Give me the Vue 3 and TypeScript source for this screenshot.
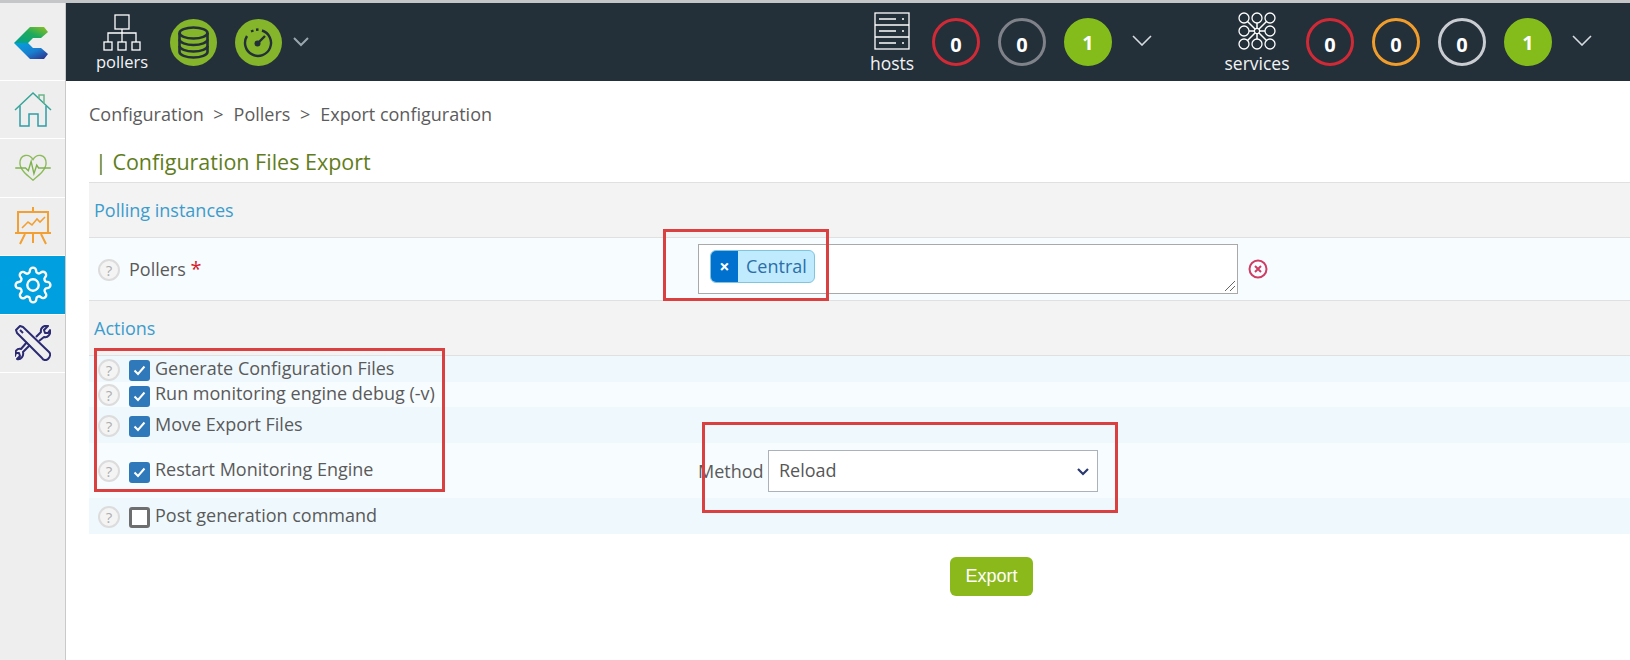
<script setup lang="ts">
interface ActionRow { label: string; checked: boolean; size: string; method?: boolean }
const rows: ActionRow[] = [
  { label: 'Generate Configuration Files', checked: true, size: 'r1' },
  { label: 'Run monitoring engine debug (-v)', checked: true, size: 'r2' },
  { label: 'Move Export Files', checked: true, size: 'r3' },
  { label: 'Restart Monitoring Engine', checked: true, size: 'r4', method: true },
  { label: 'Post generation command', checked: false, size: 'r5' },
]
const hostBadges = [
  { v: 0, c: 'red' }, { v: 0, c: 'gray' }, { v: 1, c: 'green' },
]
const serviceBadges = [
  { v: 0, c: 'red' }, { v: 0, c: 'orange' }, { v: 0, c: 'light' }, { v: 1, c: 'green' },
]
const grid = [-13, 0, 13]
</script>

<template>
  <div class="page">
    <aside class="sidebar">
      <div class="side logo">
        <svg width="66" height="77" viewBox="0 0 66 77">
          <defs>
            <linearGradient id="ct" x1="0" x2="1" y1="1" y2="0">
              <stop offset="0" stop-color="#00a08e" />
              <stop offset="0.55" stop-color="#1eaa5c" />
              <stop offset="1" stop-color="#93c01f" />
            </linearGradient>
            <linearGradient id="cb" x1="0" x2="1" y1="0" y2="1">
              <stop offset="0" stop-color="#00a3de" />
              <stop offset="0.55" stop-color="#1a7fd0" />
              <stop offset="1" stop-color="#2e2a86" />
            </linearGradient>
          </defs>
          <path d="M30 24H44L48 29L41 35H33L28 40H14Z" fill="url(#ct)" />
          <path d="M14 40H28L33 45H41L48 51L44 56H30Z" fill="url(#cb)" />
        </svg>
      </div>
      <div class="side">
        <svg width="40" height="38" viewBox="0 0 40 38" fill="none" stroke="#36a598" stroke-width="1.5">
          <path d="M2 19L20 2L38 19" />
          <path d="M26 8V4H31V13" stroke="#6bb58a" />
          <path d="M7 15V35H16V23H25V35H33V15" stroke="#2f9fa5" />
        </svg>
      </div>
      <div class="side">
        <svg width="40" height="28" viewBox="0 0 40 30" fill="none" stroke="#8dbb5b" stroke-width="1.5">
          <path d="M6 10C6 0 16 -1 20 6C24 -1 34 0 34 10C34 17 26 23 20 28C14 23 6 17 6 10Z" />
          <path d="M1 15H12L15 18L18 8L21 21L24 12L26 15H39" stroke="#7fb24d" />
        </svg>
      </div>
      <div class="side">
        <svg width="36" height="38" viewBox="0 0 36 38" fill="none" stroke="#f2a033" stroke-width="2">
          <path d="M18 0V5" />
          <rect x="3" y="5" width="30" height="21" />
          <path d="M0 26H36M10 27L5 37M26 27L31 37M18 27V36" />
          <path d="M7 21L13 15L17 18L22 12L25 15L30 10" stroke-width="1.6" />
        </svg>
      </div>
      <div class="side active">
        <svg width="38" height="38" viewBox="0 0 24 24" fill="none" stroke="#fff" stroke-width="1.5" stroke-linejoin="round">
          <circle cx="12" cy="12" r="3.6" />
          <path d="M19.4 15a1.65 1.65 0 0 0 .33 1.82l.06.06a2 2 0 0 1 0 2.83 2 2 0 0 1-2.83 0l-.06-.06a1.65 1.65 0 0 0-1.82-.33 1.65 1.65 0 0 0-1 1.51V21a2 2 0 0 1-2 2 2 2 0 0 1-2-2v-.09A1.65 1.65 0 0 0 9 19.4a1.65 1.65 0 0 0-1.82.33l-.06.06a2 2 0 0 1-2.83 0 2 2 0 0 1 0-2.83l.06-.06a1.65 1.65 0 0 0 .33-1.82 1.65 1.65 0 0 0-1.51-1H3a2 2 0 0 1-2-2 2 2 0 0 1 2-2h.09A1.65 1.65 0 0 0 4.6 9a1.65 1.65 0 0 0-.33-1.82l-.06-.06a2 2 0 0 1 0-2.83 2 2 0 0 1 2.83 0l.06.06a1.65 1.65 0 0 0 1.82.33H9a1.65 1.65 0 0 0 1-1.51V3a2 2 0 0 1 2-2 2 2 0 0 1 2 2v.09a1.65 1.65 0 0 0 1 1.51 1.65 1.65 0 0 0 1.82-.33l.06-.06a2 2 0 0 1 2.83 0 2 2 0 0 1 0 2.83l-.06.06a1.65 1.65 0 0 0-.33 1.82V9a1.65 1.65 0 0 0 1.51 1H21a2 2 0 0 1 2 2 2 2 0 0 1-2 2h-.09a1.65 1.65 0 0 0-1.51 1z" />
        </svg>
      </div>
      <div class="side">
        <svg width="36" height="36" viewBox="0 0 36 36" fill="none" stroke="#2b2a72" stroke-width="2" stroke-linejoin="round">
          <path d="M1 5L5 1L8 2L34 27C36 29 35 32 33 34C31 36 28 35 27 33L2 8Z" />
          <path d="M8 8L5 5" />
          <path d="M21 12L26 7C25 3 29 0 33 1L29 5L30 8L33 8L35 5C36 9 33 13 29 12L24 16M15 20L8 27C9 31 6 35 2 34L5 31L4 28L1 28L0 31C-1 27 2 23 6 24L12 17" />
        </svg>
      </div>
    </aside>

    <div class="right">
      <header class="topbar">
        <div class="block pollers">
          <svg width="38" height="38" viewBox="0 0 38 38" fill="none" stroke="#fff" stroke-width="1.3">
            <rect x="12" y="1" width="14" height="14" />
            <path d="M19 15V28M5 28V19H33V28" />
            <rect x="1" y="28" width="8" height="8" />
            <rect x="15" y="28" width="8" height="8" />
            <rect x="29" y="28" width="8" height="8" />
          </svg>
          <span>pollers</span>
        </div>
        <svg class="round db" width="47" height="47" viewBox="0 0 47 47">
          <circle cx="23.5" cy="23.5" r="23.5" fill="#84b52a" />
          <g fill="none" stroke="#232f39" stroke-width="2.6">
            <ellipse cx="23.5" cy="14" rx="14" ry="5.5" />
            <path d="M9.5 14V33C9.5 36 16 38.500 23.500 38.500C31 38.500 37.500 36 37.500 33V14" />
            <path d="M9.500 20.500C9.500 23.500 16 26 23.500 26C31 26 37.500 23.500 37.500 20.500" />
            <path d="M9.500 27C9.500 30 16 32.500 23.500 32.500C31 32.500 37.500 30 37.500 27" />
          </g>
        </svg>
        <svg class="round gauge" width="47" height="47" viewBox="0 0 47 47">
          <circle cx="23.500" cy="23.500" r="23.500" fill="#84b52a" />
          <g fill="none" stroke="#232f39" stroke-width="2.4">
            <path d="M27 11.500A13 13 0 1 1 12 17" />
            <path d="M16 12.500L18.500 11.500M21 10.700L23.500 10.500" />
            <path d="M23 24L30 17" />
          </g>
          <circle cx="22.500" cy="24.500" r="3" fill="#232f39" />
        </svg>
        <svg class="chev first" width="16" height="10" viewBox="0 0 16 10" fill="none" stroke="#9aa6ae" stroke-width="2">
          <path d="M1 1L8 8L15 1" />
        </svg>

        <div class="block hosts">
          <svg width="36" height="38" viewBox="0 0 36 38" fill="none" stroke="#fff" stroke-width="1.3">
            <rect x="1" y="1" width="34" height="36" />
            <path d="M1 13H35M1 25H35" stroke-width="1.6" />
            <path d="M5 7H22M5 19H22M5 31H22M28 7H30M28 19H30M28 31H30" />
          </svg>
          <span>hosts</span>
        </div>
        <div class="badges">
          <span v-for="(b, i) in hostBadges" :key="i" class="badge" :class="b.c">{{ b.v }}</span>
        </div>
        <svg class="chev big" width="20" height="11" viewBox="0 0 20 11" fill="none" stroke="#d6dbdf" stroke-width="1.6">
          <path d="M1 1L10 10L19 1" />
        </svg>

        <div class="block services">
          <svg width="38" height="38" viewBox="-19 -19 38 38" fill="none" stroke="#fff" stroke-width="1.3">
            <path d="M-10 -10L10 10M10 -10L-10 10M-8 0H8M0 -8V8" stroke-width="1.5" />
            <template v-for="x in grid" :key="x">
              <circle v-for="y in grid" :key="y" :cx="x" :cy="y" :r="x === 0 && y === 0 ? 2.6 : 5" fill="#232f39" />
            </template>
          </svg>
          <span>services</span>
        </div>
        <div class="badges">
          <span v-for="(b, i) in serviceBadges" :key="i" class="badge" :class="b.c">{{ b.v }}</span>
        </div>
        <svg class="chev big" width="20" height="11" viewBox="0 0 20 11" fill="none" stroke="#d6dbdf" stroke-width="1.6">
          <path d="M1 1L10 10L19 1" />
        </svg>
      </header>

      <main class="main">
        <nav class="crumbs">
          <span>Configuration</span><i>&gt;</i><span>Pollers</span><i>&gt;</i><span>Export configuration</span>
        </nav>
        <h1 class="title">| Configuration Files Export</h1>

        <section class="head">Polling instances</section>
        <div class="row pollers-row">
          <div class="left">
            <span class="help">?</span>
            <span class="lbl">Pollers <b>*</b></span>
          </div>
          <div class="cell">
            <div class="box">
              <span class="chip"><em>×</em><span>Central</span></span>
              <svg class="grip" width="12" height="12" viewBox="0 0 12 12" stroke="#555" stroke-width="0.9">
                <path d="M1 11L11 1M6 11L11 6" />
              </svg>
            </div>
            <svg class="del" width="20" height="20" viewBox="0 0 20 20" fill="none" stroke="#d03c64" stroke-width="2">
              <circle cx="10" cy="10" r="8.500" />
              <path d="M7 7L13 13M13 7L7 13" />
            </svg>
          </div>
        </div>

        <section class="head">Actions</section>
        <div v-for="r in rows" :key="r.label" class="row" :class="r.size">
          <div class="left">
            <span class="help">?</span>
            <span class="cb" :class="{ on: r.checked }">
              <svg v-if="r.checked" width="13" height="11" viewBox="0 0 13 11" fill="none" stroke="#fff" stroke-width="2">
                <path d="M1.500 5.500L5 9L11.500 1.500" />
              </svg>
            </span>
            <span class="lbl tight">{{ r.label }}</span>
          </div>
          <div v-if="r.method" class="cell">
            <label class="method">Method</label>
            <div class="selectwrap">
              <select class="sel"><option>Reload</option><option>Restart</option></select>
              <svg width="12" height="8" viewBox="0 0 12 8" fill="none" stroke="#2b3a6e" stroke-width="2.200">
                <path d="M1 1L6 6L11 1" />
              </svg>
            </div>
          </div>
        </div>

        <div class="actions"><button class="export">Export</button></div>
      </main>
    </div>

    <div class="mark m1"></div>
    <div class="mark m2"></div>
    <div class="mark m3"></div>
  </div>
</template>

<style>
html, body { margin: 0; background: #fff; overflow: hidden; }
</style>

<style scoped>
.page {
  position: relative;
  display: flex;
  width: 1630px;
  height: 660px;
  box-sizing: border-box;
  border-top: 3px solid #c4c6c8;
  font-family: "Open Sans", sans-serif;
  color: #575757;
  overflow: hidden;
}
.sidebar {
  width: 65px;
  flex: none;
  background: #eeeeee;
  border-right: 1px solid #c9c9c9;
}
.side {
  height: 58.400px;
  box-sizing: border-box;
  border-bottom: 1px solid #fff;
  display: flex;
  align-items: center;
  justify-content: center;
}
.side.logo { height: 78px; align-items: flex-start; }
.side.logo svg { flex: none; }
.side.active { background: #009fdf; }
.right { flex: 1; min-width: 0; display: flex; flex-direction: column; }

.topbar {
  height: 78px;
  background: #232f39;
  display: flex;
  align-items: center;
  color: #fff;
  padding-left: 23px;
}
.block {
  display: flex;
  flex-direction: column;
  align-items: center;
  font-size: 17.500px;
  line-height: 20px;
  color: #f2f4f5;
}
.block svg { display: block; }
.block span { margin-top: 3px; }
.block.pollers { width: 66px; margin-top: 1px; }
.block.pollers span { margin-top: 0; font-size: 16.500px; }
.block.hosts { width: 60px; margin-left: 553px; margin-top: 1px; }
.block.services { width: 70px; margin-left: 70px; margin-top: 1px; }
.round.db { margin-left: 15px; }
.round.gauge { margin-left: 18px; }
.chev.first { margin-left: 11px; }
.chev.big { margin-left: 20px; margin-top: -3px; }
.badges { display: flex; gap: 18px; margin-left: 10px; }
.block.services + .badges { margin-left: 14px; }
.badge {
  width: 48px;
  height: 48px;
  box-sizing: border-box;
  border-radius: 50%;
  border: 3px solid;
  padding-top: 5px;
  display: flex;
  align-items: center;
  justify-content: center;
  font-weight: 700;
  font-size: 20px;
  color: #fff;
}
.badge.red { border-color: #d02a36; }
.badge.gray { border-color: #7f8288; }
.badge.orange { border-color: #f19d2c; }
.badge.light { border-color: #c9cdd1; }
.badge.green { border-color: #84bd1b; background: #84bd1b; padding-top: 0; }

.main { flex: 1; padding-left: 23px; }
.crumbs {
  display: flex;
  height: 24px;
  line-height: 24px;
  margin-top: 21px;
  font-size: 18px;
  color: #5c5c5c;
}
.crumbs i { font-style: normal; margin: 0 10px 0 9.500px; }
.title {
  margin: 24px 0 8px;
  padding-left: 6px;
  font-size: 21.500px;
  line-height: 24px;
  font-weight: 400;
  color: #5f7d20;
}
.head {
  height: 56px;
  box-sizing: border-box;
  border-top: 1px solid #e0e0e0;
  border-bottom: 1px solid #e0e0e0;
  background: #f3f3f3;
  color: #3b9ccd;
  font-size: 18px;
  line-height: 54px;
  padding-left: 5px;
}
.row { display: grid; grid-template-columns: 609px 1fr; align-items: center; }
.left { display: flex; align-items: center; padding-left: 9px; }
.cell { display: flex; align-items: center; }
.pollers-row { height: 62px; background: #f7fcff; }
.r1 { height: 26px; background: #eff9fd; }
.r2 { height: 25px; background: #f7fcff; }
.r3 { height: 36px; background: #eff9fd; }
.r4 { height: 55px; background: #f7fcff; }
.r5 { height: 36px; background: #eff9fd; }

.help {
  width: 22px;
  height: 22px;
  box-sizing: border-box;
  flex: none;
  border-radius: 50%;
  border: 2px solid #dcdcdc;
  background: #f4f4f4;
  color: #adadad;
  font-size: 15px;
  line-height: 18px;
  text-align: center;
  margin-top: 1px;
}
.pollers-row .help { margin-top: 2px; margin-right: 9px; }
.cb {
  width: 21px;
  height: 21px;
  flex: none;
  box-sizing: border-box;
  margin-left: 9px;
  margin-right: 5px;
  margin-top: 3px;
  border-radius: 3px;
  background: #fff;
  border: 3px solid #6e6e6e;
  display: flex;
  align-items: center;
  justify-content: center;
}
.cb.on { background: #2f78b9; border: 0; }
.lbl { font-size: 18px; line-height: 22px; color: #5a5a5a; white-space: nowrap; }
.lbl b { color: #d5202b; font-weight: 400; font-size: 20px; line-height: 20px; }
.lbl.tight { margin-top: -3px; }

.box {
  position: relative;
  width: 540px;
  height: 50px;
  box-sizing: border-box;
  background: #fff;
  border: 1px solid #a9a9a9;
  padding: 5px 11px;
}
.chip {
  display: inline-flex;
  height: 33px;
  box-sizing: border-box;
  border: 1px solid #7fc5de;
  border-radius: 6px;
  background: #c0ebff;
  overflow: hidden;
  color: #2b6ea8;
  font-size: 18px;
  line-height: 31px;
}
.chip em {
  width: 27px;
  background: #0071ce;
  color: #fff;
  font-style: normal;
  font-weight: 700;
  text-align: center;
}
.chip span { padding: 0 7px 0 8px; }
.grip { position: absolute; right: 1px; bottom: 1px; }
.del { margin-left: 10px; }

.method { font-size: 18px; width: 70px; flex: none; white-space: nowrap; color: #5a5a5a; }
.selectwrap { position: relative; width: 330px; height: 42px; }
.selectwrap svg { position: absolute; right: 9px; top: 18px; pointer-events: none; }
.sel {
  appearance: none;
  width: 100%;
  height: 100%;
  box-sizing: border-box;
  border: 1px solid #acb2bb;
  border-radius: 0;
  background: #fff;
  padding: 0 10px 1px;
  font-family: "Open Sans", sans-serif;
  font-size: 18px;
  color: #575757;
}
.actions { padding: 23px 0 0 861px; }
.export {
  width: 83px;
  height: 39px;
  border: 0;
  border-radius: 6px;
  background: #8bb91b;
  color: #fff;
  font-family: "Liberation Sans", sans-serif;
  font-size: 18px;
  padding: 0;
}
.mark { position: absolute; border: 3px solid #d9403f; box-sizing: border-box; pointer-events: none; }
.m1 { left: 663px; top: 226px; width: 166px; height: 72px; }
.m2 { left: 94px; top: 345px; width: 351px; height: 144px; }
.m3 { left: 702px; top: 419px; width: 416px; height: 91px; }
</style>
